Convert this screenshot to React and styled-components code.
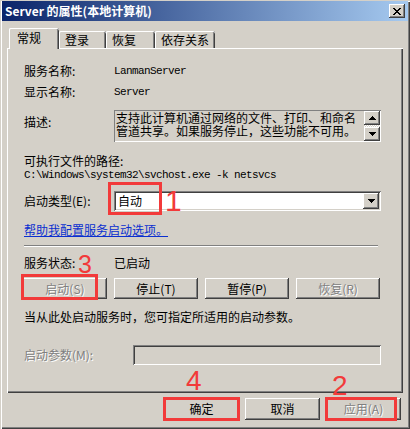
import React from 'react';
import styled, { createGlobalStyle, css } from 'styled-components';

const Global = createGlobalStyle`
  html, body { margin: 0; padding: 0; background: #d4d0c8; }
  body {
    font-family: "Noto Sans CJK SC", "Liberation Sans", sans-serif;
    font-size: 12px;
    color: #000;
  }
`;

const raised = css`
  box-shadow: inset -1px -1px #404040, inset 1px 1px #ffffff,
    inset -2px -2px #808080, inset 2px 2px #d4d0c8;
`;

const sunken = css`
  box-shadow: inset 1px 1px #808080, inset -1px -1px #ffffff,
    inset 2px 2px #404040, inset -2px -2px #d4d0c8;
`;

const disabledText = css`
  color: #808080;
  text-shadow: 1px 1px 0 #ffffff;
`;

const Window = styled.div`
  position: relative;
  width: 410px;
  height: 429px;
  box-sizing: border-box;
  padding: 1px 2px 2px 2px;
  background: #d4d0c8;
  box-shadow: inset 1px 1px #d4d0c8, inset 2px 2px #ffffff,
    inset -1px -1px #404040, inset -2px -2px #808080;
  overflow: hidden;
`;

const TitleBar = styled.div`
  height: 20px;
  display: flex;
  align-items: center;
  justify-content: space-between;
  padding: 0 3px 0 3px;
  background: linear-gradient(to right, #0a246a, #a6caf0);
  color: #fff;
  font-weight: bold;
  font-size: 12px;
`;

const TitleText = styled.span`
  line-height: 14px;
  white-space: nowrap;
`;

const CloseButton = styled.div`
  width: 16px;
  height: 14px;
  background: #d4d0c8;
  ${raised};
  display: flex;
  align-items: center;
  justify-content: center;
`;

const Tabs = styled.div`
  display: flex;
  align-items: flex-end;
  height: 20px;
  margin-top: 7px;
  padding-left: 7px;
`;

const Tab = styled.div`
  position: relative;
  box-sizing: border-box;
  width: ${p => p.$w}px;
  height: ${p => (p.$active ? 21 : 17)}px;
  margin-bottom: ${p => (p.$active ? -1 : 0)}px;
  z-index: ${p => (p.$active ? 1 : 0)};
  padding: ${p => (p.$active ? '4px 0 0 8px' : '3px 0 0 6px')};
  background: #d4d0c8;
  line-height: 12px;
  white-space: nowrap;
  border-radius: 2px 2px 0 0;
  box-shadow: inset 1px 0 #ffffff, inset 0 1px #ffffff, inset -1px 0 #404040,
    inset -2px 0 #808080;
`;

const Panel = styled.div`
  box-sizing: border-box;
  margin-left: 5px;
  width: 396px;
  height: 345px;
  padding: 17px 20px 0 17px;
  display: flex;
  flex-direction: column;
  box-shadow: inset 1px 1px #ffffff, inset -1px -1px #404040,
    inset -2px -2px #808080;
`;

const Row = styled.div`
  display: flex;
  align-items: ${p => p.$align || 'center'};
  height: ${p => p.$h}px;
  margin-top: ${p => p.$mt || 0}px;
  flex-shrink: 0;
`;

const Label = styled.span`
  width: ${p => p.$w || 90}px;
  flex-shrink: 0;
  line-height: 12px;
  white-space: nowrap;
  margin-top: ${p => p.$mt || 0}px;
  ${p => p.$disabled && disabledText};
`;

const Text = styled.span`
  line-height: 12px;
  white-space: nowrap;
`;

const Mono = styled.span`
  font-family: "Liberation Mono", "DejaVu Sans Mono", monospace;
  font-size: 11px;
  letter-spacing: -0.6px;
  line-height: 12px;
  white-space: nowrap;
`;

const Description = styled.div`
  position: relative;
  box-sizing: border-box;
  width: 267px;
  height: 32px;
  display: flex;
  background: #d4d0c8;
  box-shadow: inset 1px 1px #808080, inset -1px -1px #ffffff;
`;

const DescText = styled.div`
  flex: 1;
  display: flex;
  flex-direction: column;
  padding: 1px 0 0 2px;
`;

const DescLine = styled.div`
  line-height: 13px;
  white-space: nowrap;
`;

const ScrollBar = styled.div`
  width: 16px;
  margin: 1px 1px 1px 0;
  display: flex;
  flex-direction: column;
  justify-content: space-between;
  background-image: repeating-conic-gradient(#ffffff 0 25%, #d4d0c8 0 50%);
  background-size: 2px 2px;
`;

const ScrollButton = styled.div`
  width: 16px;
  height: 14px;
  background: #d4d0c8;
  ${raised};
  display: flex;
  align-items: center;
  justify-content: center;
`;

const Combo = styled.div`
  box-sizing: border-box;
  width: 267px;
  height: 20px;
  background: #fff;
  ${sunken};
  display: flex;
  align-items: center;
  padding: 2px 2px 2px 4px;
`;

const ComboValue = styled.span`
  flex: 1;
  line-height: 12px;
`;

const DropButton = styled.div`
  width: 16px;
  height: 16px;
  background: #d4d0c8;
  ${raised};
  display: flex;
  align-items: center;
  justify-content: center;
`;

const Link = styled.a`
  color: #0a2fd0;
  text-decoration: underline;
  line-height: 12px;
  white-space: nowrap;
  cursor: pointer;
`;

const Separator = styled.div`
  width: 354px;
  height: 2px;
  margin-top: ${p => p.$mt}px;
  flex-shrink: 0;
  box-shadow: inset 0 1px #808080, inset 0 -1px #ffffff;
`;

const ButtonRow = styled.div`
  display: grid;
  grid-template-columns: repeat(4, 84px);
  column-gap: 7px;
  margin-left: -1px;
  margin-top: ${p => p.$mt}px;
  flex-shrink: 0;
`;

const Button = styled.div`
  box-sizing: border-box;
  width: ${p => (p.$w ? `${p.$w}px` : 'auto')};
  height: ${p => p.$h || 21}px;
  background: #d4d0c8;
  ${raised};
  display: flex;
  align-items: center;
  justify-content: center;
  line-height: 12px;
  white-space: nowrap;
  ${p => p.$disabled && disabledText};
`;

const Field = styled.div`
  box-sizing: border-box;
  width: 248px;
  height: 20px;
  background: #d4d0c8;
  ${sunken};
`;

const Footer = styled.div`
  display: flex;
  justify-content: flex-end;
  gap: 6px;
  margin-top: 5px;
  padding-right: 7px;
`;

const AnnoBox = styled.div`
  position: absolute;
  left: ${p => p.$x}px;
  top: ${p => p.$y}px;
  width: ${p => p.$w}px;
  height: ${p => p.$h}px;
  box-sizing: border-box;
  border: 3px solid #f23a3a;
  pointer-events: none;
`;

const AnnoNum = styled.div`
  position: absolute;
  left: ${p => p.$x}px;
  top: ${p => p.$y}px;
  font-family: "Liberation Sans", Arial, sans-serif;
  font-size: ${p => p.$size}px;
  line-height: 1;
  color: #f23a3a;
  pointer-events: none;
`;

const CloseIcon = () => (
  <svg width="8" height="7" viewBox="0 0 8 7" shapeRendering="crispEdges">
    <path
      fill="#000"
      d="M0 0h2v1H0zM6 0h2v1H6zM1 1h2v1H1zM5 1h2v1H5zM2 2h4v1H2zM3 3h2v1H3zM2 4h4v1H2zM1 5h2v1H1zM5 5h2v1H5zM0 6h2v1H0zM6 6h2v1H6z"
    />
  </svg>
);

const Arrow = ({ up }) => (
  <svg width="7" height="4" viewBox="0 0 7 4" shapeRendering="crispEdges">
    <path
      fill="#000"
      d={up ? 'M3 0h1v1H3zM2 1h3v1H2zM1 2h5v1H1zM0 3h7v1H0z' : 'M0 0h7v1H0zM1 1h5v1H1zM2 2h3v1H2zM3 3h1v1H3z'}
    />
  </svg>
);

const tabs = [
  { label: '常规', w: 50, active: true },
  { label: '登录', w: 47 },
  { label: '恢复', w: 49 },
  { label: '依存关系', w: 60 },
];

export default function App() {
  return (
    <>
      <Global />
      <Window>
        <TitleBar>
          <TitleText>Server 的属性(本地计算机)</TitleText>
          <CloseButton>
            <CloseIcon />
          </CloseButton>
        </TitleBar>

        <Tabs>
          {tabs.map(t => (
            <Tab key={t.label} $w={t.w} $active={t.active}>
              {t.label}
            </Tab>
          ))}
        </Tabs>

        <Panel>
          <Row $h={12}>
            <Label>服务名称:</Label>
            <Mono>LanmanServer</Mono>
          </Row>
          <Row $h={12} $mt={9}>
            <Label>显示名称:</Label>
            <Mono>Server</Mono>
          </Row>
          <Row $h={32} $mt={12} $align="flex-start">
            <Label $mt={6}>描述:</Label>
            <Description>
              <DescText>
                <DescLine>支持此计算机通过网络的文件、打印、和命名</DescLine>
                <DescLine>管道共享。如果服务停止，这些功能不可用。</DescLine>
              </DescText>
              <ScrollBar>
                <ScrollButton>
                  <Arrow up />
                </ScrollButton>
                <ScrollButton>
                  <Arrow />
                </ScrollButton>
              </ScrollBar>
            </Description>
          </Row>
          <Row $h={12} $mt={13}>
            <Text>可执行文件的路径:</Text>
          </Row>
          <Row $h={12} $mt={2}>
            <Mono>C:\Windows\system32\svchost.exe -k netsvcs</Mono>
          </Row>
          <Row $h={20} $mt={10}>
            <Label>启动类型(E):</Label>
            <Combo>
              <ComboValue>自动</ComboValue>
              <DropButton>
                <Arrow />
              </DropButton>
            </Combo>
          </Row>
          <Row $h={12} $mt={13}>
            <Link>帮助我配置服务启动选项。</Link>
          </Row>
          <Separator $mt={9} />
          <Row $h={12} $mt={10}>
            <Label>服务状态:</Label>
            <Text>已启动</Text>
          </Row>
          <ButtonRow $mt={9}>
            <Button $disabled>启动(S)</Button>
            <Button>停止(T)</Button>
            <Button>暂停(P)</Button>
            <Button $disabled>恢复(R)</Button>
          </ButtonRow>
          <Row $h={12} $mt={12}>
            <Text>当从此处启动服务时，您可指定所适用的启动参数。</Text>
          </Row>
          <Row $h={20} $mt={22}>
            <Label $w={109} $disabled>
              启动参数(M):
            </Label>
            <Field />
          </Row>
        </Panel>

        <Footer>
          <Button $w={75} $h={22}>确定</Button>
          <Button $w={75} $h={22}>取消</Button>
          <Button $w={75} $h={22} $disabled>应用(A)</Button>
        </Footer>

        <AnnoBox $x={108} $y={182} $w={54} $h={33} />
        <AnnoNum $x={165} $y={186} $size={30}>1</AnnoNum>
        <AnnoBox $x={21} $y={274} $w={77} $h={26} />
        <AnnoNum $x={78} $y={252} $size={25}>3</AnnoNum>
        <AnnoBox $x={163} $y={397} $w={77} $h={24} />
        <AnnoNum $x={186} $y={367} $size={28}>4</AnnoNum>
        <AnnoBox $x={325} $y={397} $w={72} $h={24} />
        <AnnoNum $x={332} $y={372} $size={28}>2</AnnoNum>
      </Window>
    </>
  );
}
